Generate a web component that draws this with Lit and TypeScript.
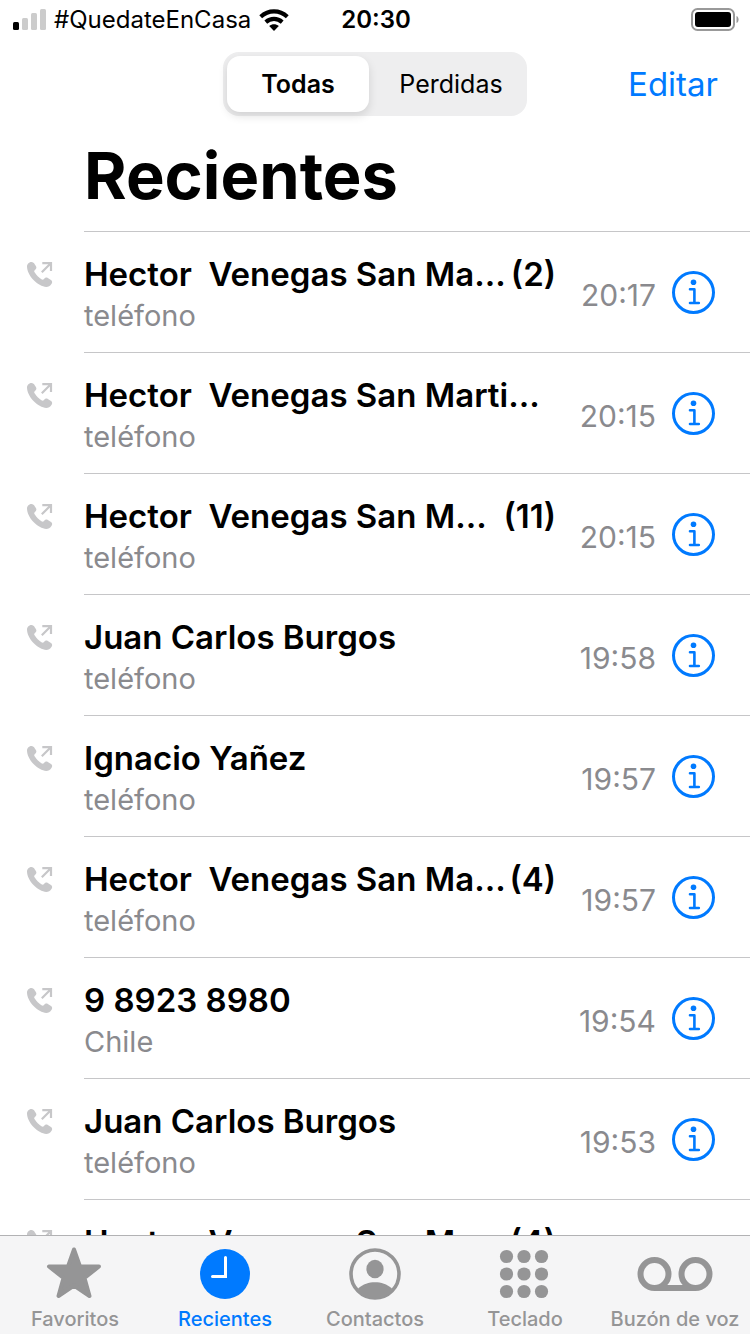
import { LitElement, html, css, svg } from "lit";
import { customElement, property, state } from "lit/decorators.js";
import { classMap } from "lit/directives/class-map.js";

interface Call {
  name: string;
  count?: number;
  label: string;
  time: string;
}

const CALLS: Call[] = [
  { name: "Hector  Venegas San Ma...", count: 2, label: "teléfono", time: "20:17" },
  { name: "Hector  Venegas San Marti...", label: "teléfono", time: "20:15" },
  { name: "Hector  Venegas San M...", count: 11, label: "teléfono", time: "20:15" },
  { name: "Juan Carlos Burgos", label: "teléfono", time: "19:58" },
  { name: "Ignacio Yañez", label: "teléfono", time: "19:57" },
  { name: "Hector  Venegas San Ma...", count: 4, label: "teléfono", time: "19:57" },
  { name: "9 8923 8980", label: "Chile", time: "19:54" },
  { name: "Juan Carlos Burgos", label: "teléfono", time: "19:53" },
  { name: "Hector  Venegas San M...", count: 4, label: "teléfono", time: "19:53" },
];

const TABS = [
  {
    id: "favoritos",
    text: "Favoritos",
    icon: svg`<path d="M39 3.5 45 20.5 64 20.500 49.500 32 54.500 50 39 39.500 23.500 50 28.500 32 14 20.500 33 20.500Z"
      fill="currentColor" stroke="currentColor" stroke-width="4" stroke-linejoin="round"/>`,
  },
  {
    id: "recientes",
    text: "Recientes",
    icon: svg`<circle cx="40" cy="28" r="25" fill="currentColor"/>
      <path d="M40.500 11.500V30.500H27.500" fill="none" stroke="#fff" stroke-width="3" stroke-linecap="round"/>`,
  },
  {
    id: "contactos",
    text: "Contactos",
    icon: svg`<circle cx="40" cy="28" r="24" fill="none" stroke="currentColor" stroke-width="3.600"/>
      <ellipse cx="40" cy="23" rx="8.600" ry="9.300" fill="currentColor"/>
      <path d="M23 42.500C28 38 34 36.200 40 36.200S52 38 57 42.500C53 49 47 53 40 53S27 49 23 42.500Z" fill="currentColor"/>`,
  },
  {
    id: "teclado",
    text: "Teclado",
    icon: svg`${[10.5, 28, 45.5].map((y) =>
      [21.5, 39, 56.5].map((x) => svg`<circle cx=${x} cy=${y} r="6.600" fill="currentColor"/>`)
    )}`,
  },
  {
    id: "buzon",
    text: "Buzón de voz",
    icon: svg`<g fill="none" stroke="currentColor" stroke-width="6">
      <circle cx="19.500" cy="28" r="14"/><circle cx="60.500" cy="28" r="14"/><path d="M19.500 42H60.500"/></g>`,
  },
];

@customElement("status-bar")
class StatusBar extends LitElement {
  static styles = css`
    :host {
      display: grid;
      grid-template-columns: 1fr auto 1fr;
      align-items: center;
      height: 40px;
      padding: 0 11px 0 13px;
      font-size: 24px;
      line-height: 40px;
    }
    .left {
      display: flex;
      align-items: center;
      gap: 8px;
    }
    .time {
      font-weight: 600;
    }
    .battery {
      justify-self: end;
    }
    svg {
      display: block;
    }
  `;
  render() {
    return html`
      <div class="left">
        <svg width="33" height="22" viewBox="0 0 33 22" aria-hidden="true">
          <rect x="0" y="13" width="6" height="8" rx="1.500" fill="#000" />
          <rect x="9" y="9" width="6" height="12" rx="1.500" fill="#ccc" />
          <rect x="18" y="4" width="6" height="17" rx="1.500" fill="#ccc" />
          <rect x="27" y="0" width="6" height="21" rx="1.500" fill="#ccc" />
        </svg>
        <span>#QuedateEnCasa</span>
        <svg width="30" height="22" viewBox="0 0 30 22" aria-label="Wi-Fi">
          <g fill="none" stroke="#000" stroke-width="4.200">
            <path d="M1.700 7.700C9.500 .7 20.500 .7 28.300 7.700" />
            <path d="M6.800 13.100C11.600 8.900 18.400 8.900 23.200 13.100" />
          </g>
          <path d="M10.200 17.100C13 14.700 17 14.700 19.800 17.100L15 22Z" />
        </svg>
      </div>
      <span class="time">20:30</span>
      <svg class="battery" width="48" height="24" viewBox="0 0 48 24" aria-label="Batería">
        <rect x="1" y="1" width="42" height="21" rx="5.500" fill="none" stroke="#999" stroke-width="2" />
        <rect x="4" y="4" width="36" height="15" rx="3" />
        <path d="M45.500 8C48.300 9 48.300 14 45.500 15Z" fill="#999" />
      </svg>
    `;
  }
}

@customElement("call-row")
class CallRow extends LitElement {
  @property({ attribute: false }) call!: Call;

  static styles = css`
    :host {
      display: grid;
      grid-template-columns: 84px minmax(0, 1fr);
      height: 121px;
    }
    .kind {
      padding: 29px 0 0 26px;
    }
    .body {
      display: grid;
      grid-template-columns: minmax(0, 1fr) 84px 44px;
      border-top: 1px solid #c6c6c8;
      padding-right: 34px;
      column-gap: 16px;
    }
    .who {
      padding-top: 22px;
    }
    .top {
      display: flex;
      justify-content: space-between;
      font-size: 33px;
      line-height: 40px;
      font-weight: 600;
      white-space: pre;
    }
    .label {
      font-size: 29px;
      line-height: 44px;
      color: #8a8a8e;
    }
    .time {
      padding-top: 42px;
      text-align: right;
      font-size: 30px;
      line-height: 42px;
      color: #8a8a8e;
    }
    .info {
      align-self: start;
      margin: 38px 0 0;
      padding: 0;
      border: 0;
      background: none;
      cursor: pointer;
    }
    svg {
      display: block;
    }
  `;
  render() {
    const { name, count, label, time } = this.call;
    return html`
      <div class="kind">
        <svg width="28" height="28" viewBox="0 0 28 28" aria-label="Llamada saliente">
          <path
            fill="#c7c7c9"
            d="M1 6.500C1 4.500 2.600 2 5.500 2C7 2 8 3 8.700 4.200L10 6.300C10.800 7.700 10.300 8.800 9 9.900C8 10.700 8 11.400 8.800 12.600C10.500 15.200 12.700 17.500 15.400 19.300C16.500 20 17.200 19.900 18 19C19.200 17.600 20.400 17.200 21.800 18.100L24.600 19.800C26.300 20.800 26.600 22.300 25.600 23.800C24.200 26 22.300 27 20.200 27C16.500 27 11 24 7 19.600C3.500 15.800 1 10.500 1 6.500Z"
          />
          <path d="M15.800 12.300 24.800 3.300M16.300 3.100H25V11" fill="none" stroke="#c7c7c9" stroke-width="2.200" />
        </svg>
      </div>
      <div class="body">
        <div class="who">
          <div class="top"><span>${name}</span>${count ? html`<span>(${count})</span>` : ""}</div>
          <div class="label">${label}</div>
        </div>
        <div class="time">${time}</div>
        <button class="info" aria-label="Información">
          <svg width="44" height="44" viewBox="0 0 44 44" aria-hidden="true">
            <circle cx="21.500" cy="22.500" r="20" fill="none" stroke="#007aff" stroke-width="3" />
            <circle cx="21.500" cy="12.200" r="2.800" fill="#007aff" />
            <path
              d="M18 19.300H22.400V33M18 33H26.800"
              fill="none" stroke="#007aff" stroke-width="2.600" stroke-linecap="round" stroke-linejoin="round"
            />
          </svg>
        </button>
      </div>
    `;
  }
}

@customElement("app-root")
class AppRoot extends LitElement {
  @state() private filter = "Todas";
  @state() private tab = "recientes";

  static styles = css`
    :host {
      display: flex;
      flex-direction: column;
      height: 100vh;
      overflow: hidden;
      background: #fff;
      color: #000;
      font-family: Inter, "Liberation Sans", sans-serif;
    }
    button {
      font-family: inherit;
      border: 0;
      background: none;
      padding: 0;
      cursor: pointer;
    }
    .bar {
      display: grid;
      grid-template-columns: 1fr 304px 1fr;
      align-items: center;
      padding: 12px 32px 0;
    }
    .segments {
      grid-column: 2;
      display: grid;
      grid-template-columns: 142px 1fr;
      column-gap: 6px;
      height: 56px;
      padding: 4px 0 4px 4px;
      border-radius: 16px;
      background: #eeeeef;
    }
    .segment {
      font-size: 25px;
      border-radius: 13px;
      color: #000;
    }
    .segment.on {
      background: #fff;
      font-weight: 600;
      box-shadow: 0 4px 10px rgba(0, 0, 0, 0.12);
    }
    .edit {
      justify-self: end;
      font-size: 33px;
      line-height: 40px;
      color: #007aff;
    }
    h1 {
      margin: 0;
      padding: 20px 0 15px 84px;
      font-size: 65px;
      line-height: 80px;
      font-weight: 700;
    }
    .list {
      flex: 1;
      min-height: 0;
      overflow: hidden;
      margin: 0;
      padding: 0;
      list-style: none;
    }
    .tabs {
      display: grid;
      grid-template-columns: repeat(5, 1fr);
      border-top: 1px solid #b2b2b4;
      background: #f5f5f6;
    }
    .tab {
      display: flex;
      flex-direction: column;
      align-items: center;
      padding: 10px 0 1px;
      gap: 3px;
      font-size: 20px;
      line-height: 28px;
      font-weight: 500;
      white-space: nowrap;
      text-decoration: none;
      color: #959596;
    }
    .tab.on {
      color: #007aff;
    }
    .tab svg {
      display: block;
    }
  `;

  render() {
    return html`
      <status-bar></status-bar>
      <header>
        <div class="bar">
          <div class="segments" role="group" aria-label="Filtro">
            ${["Todas", "Perdidas"].map(
              (f) => html`<button
                class=${classMap({ segment: true, on: this.filter === f })}
                aria-pressed=${this.filter === f}
                @click=${() => (this.filter = f)}
              >${f}</button>`
            )}
          </div>
          <button class="edit">Editar</button>
        </div>
        <h1>Recientes</h1>
      </header>
      <ul class="list">
        ${CALLS.map((c) => html`<li><call-row .call=${c}></call-row></li>`)}
      </ul>
      <nav class="tabs">
        ${TABS.map(
          (t) => html`<a
            class=${classMap({ tab: true, on: this.tab === t.id })}
            href="#${t.id}"
            @click=${() => (this.tab = t.id)}
          >
            <svg width="80" height="56" viewBox="0 0 80 56" aria-hidden="true">${t.icon}</svg>
            <span>${t.text}</span>
          </a>`
        )}
      </nav>
    `;
  }
}
